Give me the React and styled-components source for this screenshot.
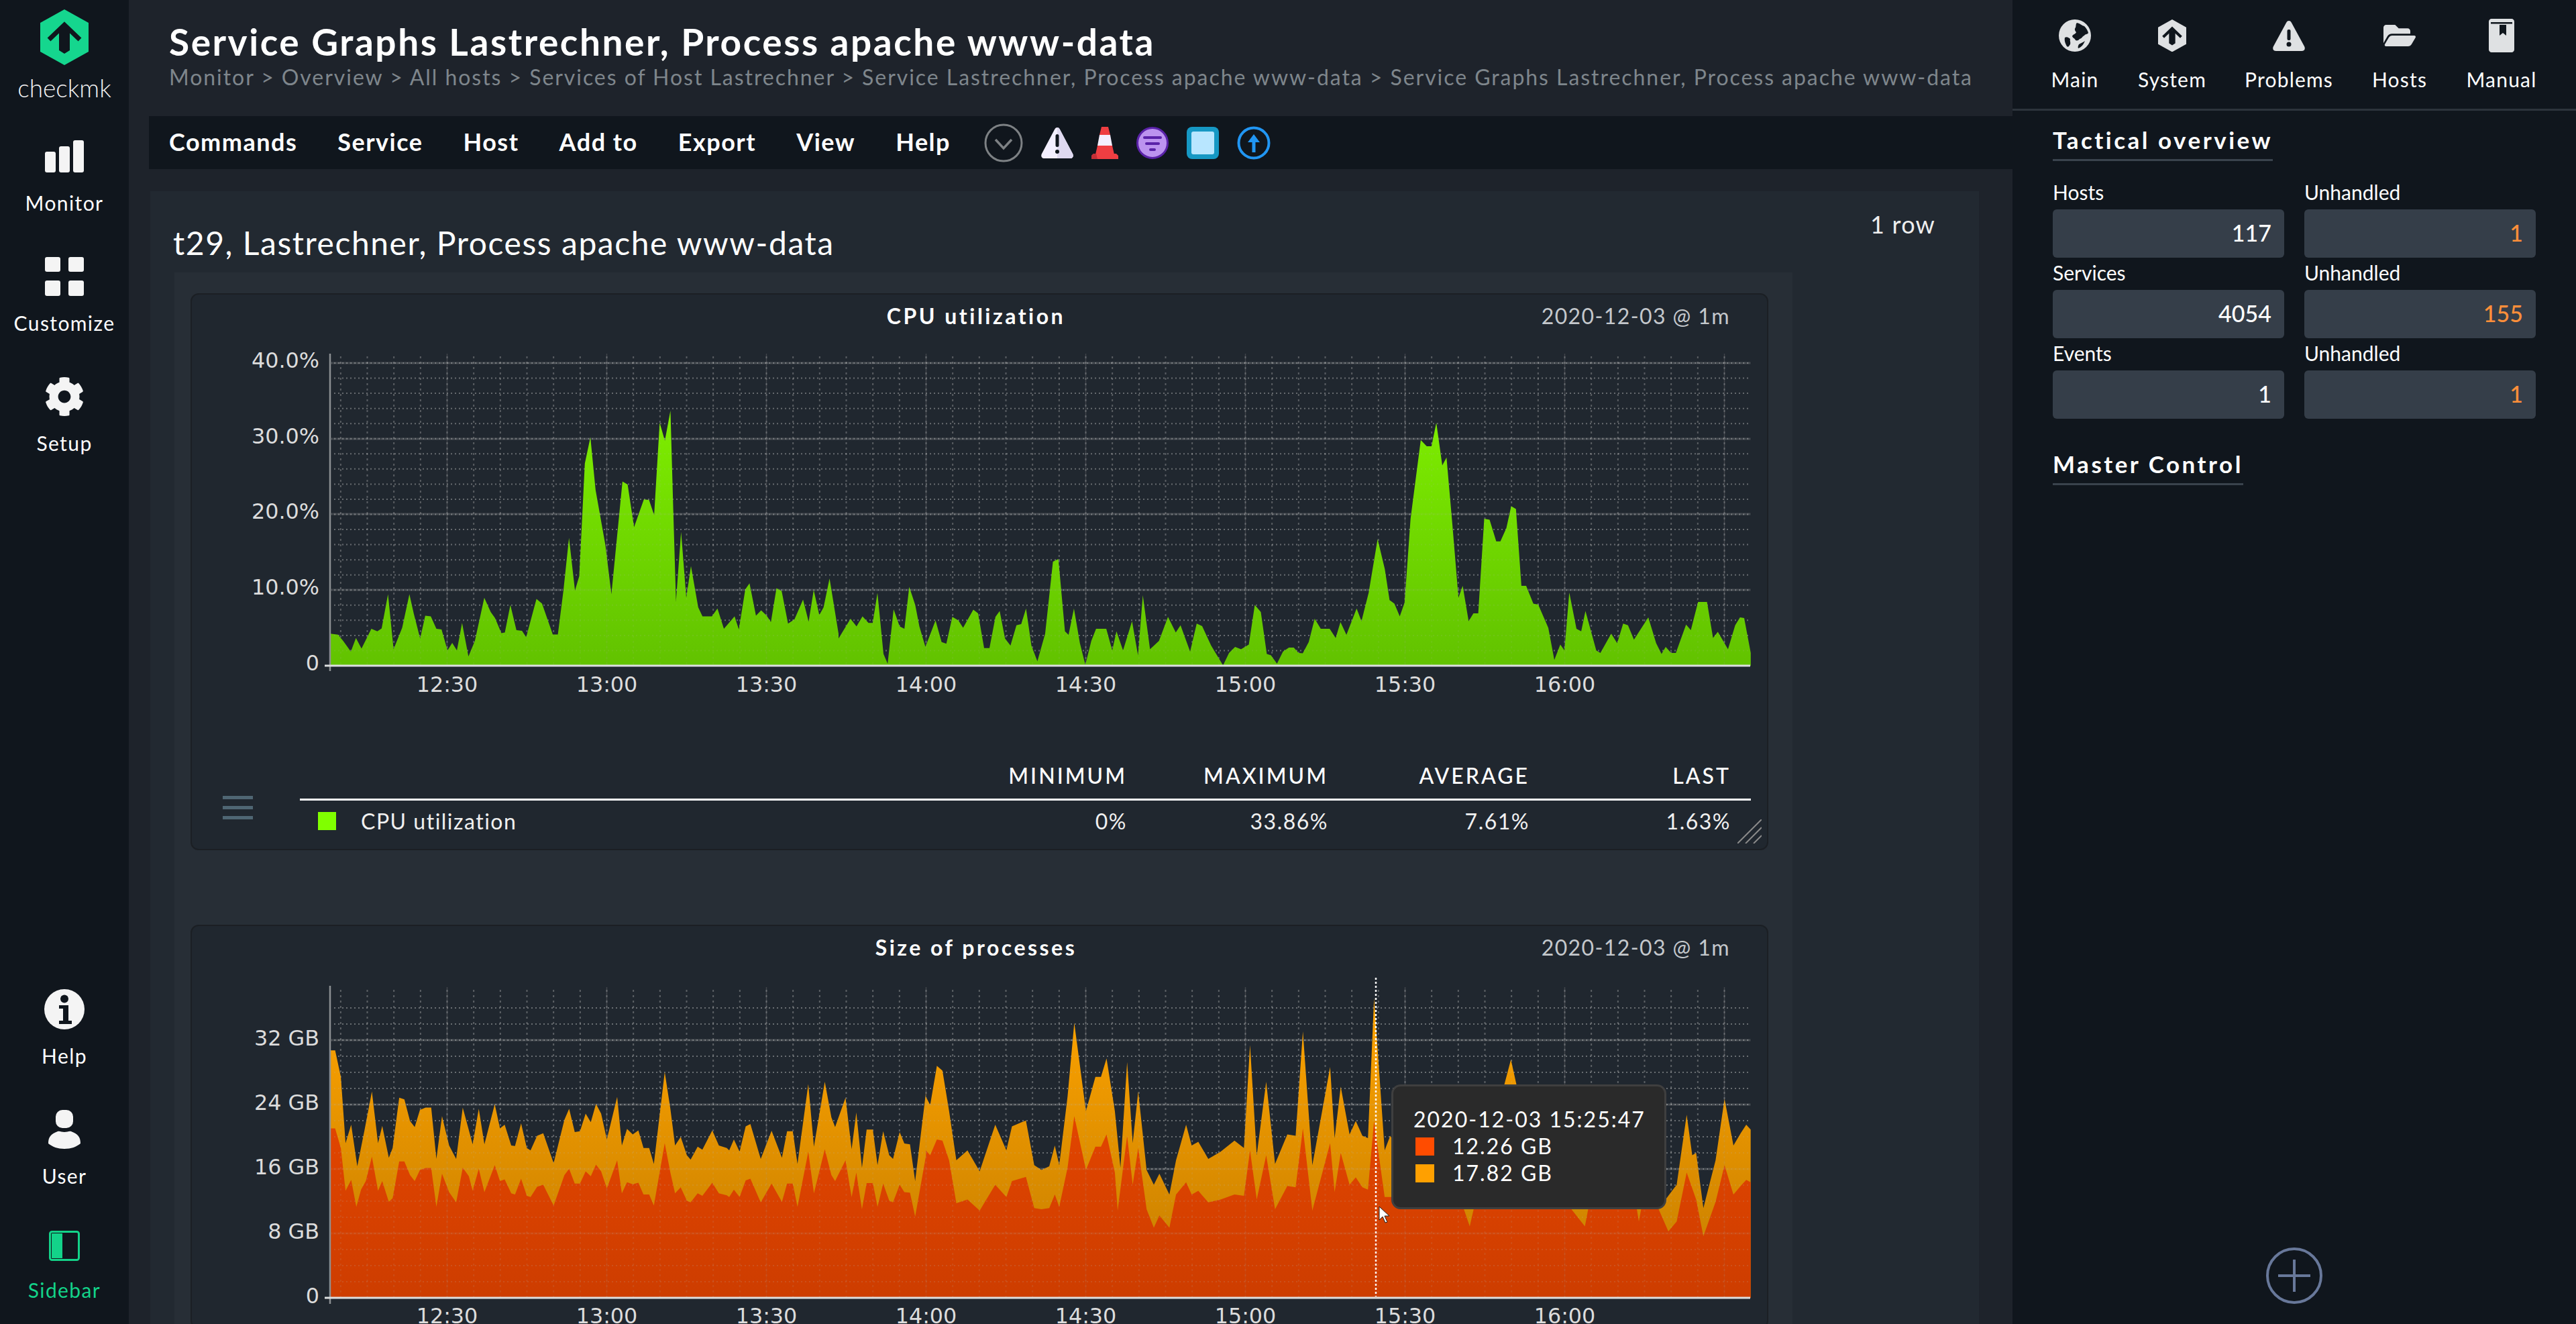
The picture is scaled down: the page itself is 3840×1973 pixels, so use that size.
import React from 'react';
import styled, { createGlobalStyle } from 'styled-components';
import { FaCog, FaFolderOpen } from 'react-icons/fa';

const GlobalStyle = createGlobalStyle`
  html, body { margin: 0; height: 100%; background: #10161d; }
  body { font-family: 'Lato', 'Liberation Sans', sans-serif; color: #fff; overflow: hidden; }
  #root { height: 100%; }
`;

const Page = styled.div`
  display: flex;
  height: 100vh;
  overflow: hidden;
`;

/* left navigation */
const Nav = styled.nav`
  width: 192px;
  flex: none;
  background: #10161d;
  display: flex;
  flex-direction: column;
  justify-content: space-between;
  padding-bottom: 29px;
  box-sizing: border-box;
`;

const Brand = styled.div`
  height: 203px;
  display: flex;
  flex-direction: column;
  align-items: center;
  padding-top: 14px;
  box-sizing: border-box;
`;

const BrandName = styled.div`
  font-size: 37px;
  font-weight: 300;
  line-height: 44px;
  margin-top: 12px;
  color: #f4f4f4;
`;

const NavGroup = styled.div`
  display: flex;
  flex-direction: column;
  gap: 61px;
`;

const NavItem = styled.div`
  height: 118px;
  display: flex;
  flex-direction: column;
  align-items: center;
  color: ${p => (p.$active ? '#13d389' : '#fff')};
  margin-top: ${p => (p.$active ? -6 : 0)}px;
`;

const NavIcon = styled.div`
  height: 60px;
  margin-bottom: ${p => (p.$active ? 18 : 21)}px;
  display: flex;
  align-items: center;
  justify-content: center;
  color: ${p => (p.$active ? '#13d389' : '#f4f4f4')};
`;

const NavLabel = styled.div`
  font-size: 30px;
  line-height: 36px;
  letter-spacing: 1.4px;
`;

/* main column */
const Main = styled.main`
  flex: 1;
  min-width: 0;
  background: #1e232b;
  display: flex;
  flex-direction: column;
`;

const Header = styled.header`
  height: 173px;
  padding: 35px 0 0 60px;
  box-sizing: border-box;
`;

const Title = styled.h1`
  margin: 0;
  font-size: 55px;
  font-weight: 700;
  line-height: 54px;
  letter-spacing: 2.55px;
  color: #fff;
`;

const Breadcrumb = styled.div`
  margin-top: 6px;
  font-size: 32px;
  line-height: 40px;
  letter-spacing: 1.95px;
  color: #7e868c;
  white-space: nowrap;
`;

const Toolbar = styled.div`
  margin-left: 30px;
  height: 79px;
  padding-left: 30px;
  display: flex;
  align-items: center;
  background: #10161d;
`;

const Menu = styled.div`
  display: flex;
  gap: 60px;
`;

const MenuItem = styled.div`
  font-size: 36px;
  font-weight: 700;
  padding-bottom: 3px;
  letter-spacing: 1.5px;
`;

const ToolIcons = styled.div`
  display: flex;
  align-items: center;
  gap: 27px;
  margin-left: 50px;
`;

const ResultPanel = styled.section`
  flex: 1;
  min-height: 0;
  margin: 33px 50px 0 32px;
  background: #222931;
  overflow: hidden;
`;

const PanelHead = styled.div`
  height: 121px;
  display: flex;
  justify-content: space-between;
  padding: 0 65px 0 34px;
`;

const PanelTitle = styled.div`
  margin-top: 52px;
  font-size: 48px;
  line-height: 50px;
  letter-spacing: 1.55px;
`;

const RowCount = styled.div`
  margin-top: 29px;
  font-size: 36px;
  line-height: 40px;
  letter-spacing: 1.2px;
  color: #eee;
`;

const Frame = styled.div`
  margin-left: 36px;
  width: 2412px;
  height: 100%;
  padding: 31px 36px 0 24px;
  box-sizing: border-box;
  background: #272e36;
`;

const GraphBox = styled.div`
  position: relative;
  background: #20272f;
  border: 2px solid #1b1f24;
  border-radius: 12px;
  & + & { margin-top: 111px; }
`;

const GraphHead = styled.div`
  height: 68px;
  display: grid;
  grid-template-columns: 1fr auto 1fr;
  align-items: center;
  padding: 0 55px 5px 45px;
  box-sizing: border-box;
`;

const GraphTitle = styled.div`
  font-size: 32px;
  font-weight: 700;
  letter-spacing: 3.5px;
  grid-column: 2;
`;

const GraphDate = styled.div`
  font-size: 32px;
  letter-spacing: 1.4px;
  color: #c4c8cc;
  justify-self: end;
`;

const Plot = styled.svg`
  display: block;
`;

const AxisText = styled.text`
  font-family: 'DejaVu Sans', sans-serif;
  font-size: 31.8px;
  fill: #dcdcdc;
`;

const Legend = styled.div`
  position: relative;
  margin: 82px 24px 0 161px;
  display: grid;
  grid-template-columns: 1fr repeat(4, 300px);
`;

const LegendHead = styled.div`
  height: 68px;
  line-height: 68px;
  border-bottom: 3px solid #fff;
  padding-right: 30px;
  text-align: right;
  text-transform: uppercase;
  font-size: 32px;
  font-weight: 500;
  letter-spacing: 3px;
`;

const LegendCell = styled.div`
  height: 72px;
  line-height: 62px;
  padding-right: 30px;
  text-align: right;
  font-size: 32px;
  letter-spacing: 1.5px;
  color: #f0f0f0;
`;

const LegendName = styled(LegendCell)`
  display: flex;
  align-items: flex-start;
  gap: 37px;
  padding-left: 27px;
  text-align: left;
`;

const Swatch = styled.span`
  width: ${p => p.$size || 27}px;
  height: 27px;
  margin-top: ${p => p.$top || 0}px;
  background: ${p => p.$color};
  flex: none;
`;

const Grip = styled.div`
  position: absolute;
  left: -115px;
  top: 64px;
  width: 45px;
  display: flex;
  flex-direction: column;
  gap: 10px;
  & > span { height: 5px; background: #4f6673; }
`;

const ResizeHandle = styled.svg`
  position: absolute;
  right: 8px;
  bottom: 8px;
`;

const Tip = styled.div`
  position: absolute;
  left: 1788px;
  top: 236px;
  width: 410px;
  height: 186px;
  box-sizing: border-box;
  padding: 29px 0 0 30px;
  background: #2a2a2a;
  border: 3px solid #3f3f3f;
  border-radius: 14px;
  font-size: 32px;
  letter-spacing: 2px;
`;

const TipRow = styled.div`
  display: flex;
  align-items: center;
  gap: 27px;
  height: 40px;
  line-height: 40px;
  margin-left: ${p => (p.$swatch ? 3 : 0)}px;
`;

/* right sidebar */
const Side = styled.aside`
  width: 840px;
  flex: none;
  background: #10161d;
  display: flex;
  flex-direction: column;
`;

const SideTabs = styled.div`
  height: 165px;
  border-bottom: 3px solid #2d343c;
  box-sizing: border-box;
  display: grid;
  grid-template-columns: 146px 144px 204px 126px 178px;
  padding: 29px 0 0 20px;
`;

const SideTab = styled.div`
  display: flex;
  flex-direction: column;
  align-items: center;
  color: #dfe1e3;
`;

const TabIcon = styled.div`
  height: 48px;
  margin-bottom: 22px;
  display: flex;
  align-items: center;
`;

const TabLabel = styled.div`
  font-size: 30px;
  line-height: 38px;
  letter-spacing: 1.2px;
  color: #fff;
`;

const SideBody = styled.div`
  flex: 1;
  padding: 23px 60px 0;
  position: relative;
`;

const Snapin = styled.h2`
  display: inline-block;
  margin: 0;
  padding-bottom: 9px;
  border-bottom: 3px solid #3a434d;
  font-size: 35px;
  font-weight: 700;
  line-height: 40px;
  letter-spacing: 3.5px;
`;

const Stats = styled.div`
  display: grid;
  grid-template-columns: 345px 345px;
  column-gap: 30px;
  margin: 24px 0 47px;
`;

const Stat = styled.div`
  display: flex;
  flex-direction: column;
  height: 120px;
`;

const StatLabel = styled.div`
  font-size: 30px;
  line-height: 44px;
  padding-bottom: 4px;
`;

const StatValue = styled.div`
  height: 72px;
  border-radius: 6px;
  background: #353e49;
  padding-right: 19px;
  text-align: right;
  font-size: 34px;
  font-weight: 500;
  line-height: 70px;
  color: ${p => (p.$warn ? '#ff8f3a' : '#fff')};
`;

const AddButton = styled.svg`
  position: absolute;
  left: 378px;
  bottom: 30px;
`;

/* drawn icons */
const BarsIcon = () => (
  <svg width="58" height="48" viewBox="0 0 58 48" fill="currentColor">
    <rect x="0" y="17" width="16" height="31" rx="3" />
    <rect x="21" y="9" width="16" height="39" rx="3" />
    <rect x="42" y="0" width="16" height="48" rx="3" />
  </svg>
);

const TilesIcon = () => (
  <svg width="58" height="58" viewBox="0 0 58 58" fill="currentColor">
    <rect x="0" y="0" width="23" height="22" rx="3" />
    <rect x="35" y="0" width="23" height="22" rx="3" />
    <rect x="0" y="35" width="23" height="23" rx="3" />
    <rect x="35" y="35" width="23" height="23" rx="3" />
  </svg>
);

const InfoIcon = () => (
  <svg width="60" height="60" viewBox="0 0 60 60">
    <circle cx="30" cy="30" r="30" fill="#f4f4f4" />
    <circle cx="30" cy="14.5" r="6" fill="#10161d" />
    <path d="M22 24h14v23h5v5H22v-5h6V29h-6z" fill="#10161d" />
  </svg>
);

const UserIcon = () => (
  <svg width="48" height="58" viewBox="0 0 48 58" fill="#f4f4f4">
    <rect x="11" y="0" width="26" height="27" rx="10" />
    <path d="M0 50C0 40 4 36 14 32c3-1 6 1 10 1s7-2 10-1c10 4 14 8 14 18-6 5-14 8-24 8S6 55 0 50z" />
  </svg>
);

const SidebarIcon = () => (
  <svg width="46" height="45" viewBox="0 0 46 45">
    <rect x="1.5" y="1.5" width="43" height="42" rx="3" fill="none" stroke="#13d389" strokeWidth="3" />
    <rect x="4" y="4" width="16" height="37" fill="#13d389" />
  </svg>
);

const LogoMark = ({ size = 72, fill = '#15d68e', ink = '#10161d' }) => (
  <svg width={size} height={(size * 83) / 72} viewBox="0 0 72 83">
    <polygon points="36,0 72,20 72,63 36,83 0,63 0,20" fill={fill} />
    <path d="M13 45 36 23l23 22" fill="none" stroke={ink} strokeWidth="7" />
    <polygon points="28,28 44,28 44,61 36,66 28,61" fill={ink} />
  </svg>
);

const GlobeIcon = () => (
  <svg width="48" height="48" viewBox="0 0 48 48">
    <circle cx="24" cy="24" r="24" fill="#dfe1e3" />
    <path d="M27 5c5 1 7 4 11 5 3 3 5 6 6 10-2 3-4 1-6 4-3 1-4 5-7 5-1 2-4 3-6 2-1-3-4-3-5-6 1-3 5-3 6-6-2-2-3-5-1-7 1-3 0-5 2-7zM9 27c3-2 6 0 8 2-1 3 1 5 0 8-2 3-3 5-5 3-2-4-4-8-3-13zM30 37c3-2 7-3 9-5-2 5-5 9-10 11-1-2 0-4 1-6z" fill="#10161d" />
  </svg>
);

const AlertIcon = () => (
  <svg width="48" height="48" viewBox="0 0 48 48">
    <path d="M24 2c2 0 3 1 4 3l19 35c2 4 0 7-4 7H5c-4 0-6-3-4-7L20 5c1-2 2-3 4-3z" fill="#dfe1e3" />
    <rect x="21.500" y="15" width="5" height="16" rx="2" fill="#10161d" />
    <circle cx="24" cy="37" r="3.500" fill="#10161d" />
  </svg>
);

const BookIcon = () => (
  <svg width="38" height="50" viewBox="0 0 38 50">
    <path d="M4 0h30c2 0 4 2 4 4v42c0 2-2 4-4 4H4c-2 0-4-2-4-4V4c0-2 2-4 4-4z" fill="#dfe1e3" />
    <rect x="3" y="5" width="32" height="2.500" fill="#10161d" />
    <path d="M16 9h10v16l-5-4-5 4z" fill="#10161d" />
  </svg>
);

const ChevronTool = () => (
  <svg width="58" height="58" viewBox="0 0 58 58">
    <circle cx="29" cy="29" r="27" fill="none" stroke="#7d8184" strokeWidth="3" />
    <path d="M17 24l12 13 12-13" fill="none" stroke="#7d8184" strokeWidth="3.500" />
  </svg>
);

const WarnTool = () => (
  <svg width="48" height="46" viewBox="0 0 48 46">
    <path d="M24 0c2 0 3 1 4 3l19 36c2 4 0 7-3 7H4c-3 0-5-3-3-7L20 3c1-2 2-3 4-3z" fill="#f3efff" />
    <path d="M24 0c2 0 3 1 4 3l19 36c2 4 0 7-3 7H24z" fill="#dfd9f0" />
    <rect x="21.500" y="10" width="5" height="19" rx="2.500" fill="#10161d" />
    <circle cx="24" cy="36" r="3" fill="#10161d" />
  </svg>
);

const ConeTool = () => (
  <svg width="40" height="48" viewBox="0 0 40 48">
    <path d="M15 0h10l3 12H12z" fill="#ef3e42" />
    <path d="M12 12h16l3 16H9z" fill="#f4efff" />
    <path d="M9 28h22l3 13H6z" fill="#ef3e42" />
    <path d="M3 40h34l3 3v5H0v-5z" fill="#ef3e42" />
    <path d="M3 40h4l2 8H0v-5z" fill="#c42f36" />
  </svg>
);

const FilterTool = () => (
  <svg width="48" height="48" viewBox="0 0 48 48">
    <circle cx="24" cy="24" r="22.500" fill="#bc93ef" stroke="#5a22a8" strokeWidth="3" />
    <rect x="10" y="14" width="28" height="4" rx="2" fill="#5a22a8" />
    <rect x="13" y="23" width="22" height="4" rx="2" fill="#5a22a8" />
    <rect x="19" y="32" width="10" height="4" rx="2" fill="#5a22a8" />
  </svg>
);

const SquareTool = () => (
  <svg width="48" height="48" viewBox="0 0 48 48">
    <rect width="48" height="48" rx="8" fill="#1698c4" />
    <rect x="7" y="7" width="34" height="34" rx="3" fill="#b8e6ff" />
  </svg>
);

const UploadTool = () => (
  <svg width="50" height="50" viewBox="0 0 50 50">
    <circle cx="25" cy="25" r="22.500" fill="none" stroke="#2196f3" strokeWidth="4" />
    <path d="M25 12l9 12h-6.500v15h-5V24H16z" fill="#2196f3" />
  </svg>
);

/* traced series, [x, y] in page pixels after scaling */
const scale = (pts, x0, sx, y0, sy) => pts.map(([x, y]) => [x0 + x / sx, y0 + y / sy]);

const cpuA = [[380,1300],[398,1304],[410,1330],[428,1375],[440,1318],[453,1362],[476,1280],[490,1290],[500,1278],[515,1135],[528,1365],[548,1275],[565,1135],[575,1215],[590,1320],[602,1225],[615,1228],[628,1280],[640,1282],[654,1370],[665,1338],[676,1370],[688,1255],[703,1395],[718,1330],[740,1150],[755,1210],[765,1235],[780,1298],[788,1295],[801,1180],[815,1285],[828,1288],[838,1315],[862,1155],[875,1175],[900,1303],[912,1303],[925,1120],[938,900],[952,1120],[962,1060],[975,590],[988,480],[1000,700],[1023,930],[1037,1135],[1063,665],[1075,678],[1090,855],[1113,740],[1125,742],[1137,805],[1150,420],[1162,495],[1175,370],[1182,800],[1188,1165],[1200,875],[1212,1150],[1223,1018],[1240,1190],[1250,1228],[1272,1228],[1285,1195],[1300,1280],[1325,1228],[1335,1282],[1350,1115],[1360,1090],[1375,1225],[1387,1203],[1400,1225],[1410,1252],[1423,1110],[1435,1122],[1450,1258],[1465,1240],[1485,1158],[1498,1250],[1510,1118],[1523,1222],[1533,1190],[1547,1070],[1568,1300]];
const cpuB = [[0,1320],[20,1238],[30,1270],[40,1228],[50,1255],[57,1255],[65,1130],[75,1385],[82,1425],[92,1198],[102,1270],[110,1280],[118,1105],[128,1180],[135,1270],[145,1355],[162,1245],[172,1335],[180,1342],[190,1230],[200,1245],[208,1275],[225,1200],[233,1215],[243,1360],[252,1360],[262,1230],[269,1205],[278,1320],[287,1350],[297,1265],[305,1260],[313,1195],[322,1350],[332,1415],[345,1300],[358,1000],[367,988],[378,1290],[384,1305],[393,1195],[403,1340],[412,1430],[422,1330],[430,1280],[447,1280],[457,1370],[464,1290],[475,1370],[490,1248],[500,1390],[508,1140],[520,1365],[535,1330],[550,1230],[563,1295],[571,1265],[587,1375],[598,1258],[607,1268],[622,1350],[642,1432],[652,1380],[662,1355],[672,1365],[685,1345],[695,1180],[705,1210],[715,1385],[722,1390],[732,1425],[742,1375],[752,1358],[760,1358],[768,1380],[775,1382],[785,1335],[795,1238],[805,1280],[820,1280],[830,1318],[838,1252],[848,1305],[865,1195],[873,1248],[885,1130],[900,905],[912,1030],[920,1160],[928,1175],[937,1228],[945,1170],[955,820],[972,492],[982,518],[990,518],[998,420],[1008,598],[1015,565],[1025,850],[1035,1150],[1042,1100],[1052,1248],[1060,1215],[1068,1215],[1078,820],[1087,825],[1098,915],[1105,915],[1115,860],[1123,768],[1131,780],[1140,1100],[1148,1100],[1160,1175],[1168,1178],[1185,1275],[1195,1410],[1205,1345],[1212,1370],[1220,1128],[1232,1280],[1240,1290],[1247,1205],[1265,1370],[1272,1380],[1290,1300],[1300,1340],[1310,1258],[1318,1265],[1328,1325],[1352,1232],[1365,1340],[1374,1385],[1381,1355],[1390,1380],[1398,1380],[1415,1262],[1423,1285],[1435,1168],[1450,1168],[1460,1318],[1468,1292],[1485,1365],[1497,1265],[1505,1232],[1512,1235],[1523,1380]];
const cpuLine = [...scale(cpuA, 250, 1.568, 480, 2.8), ...scale(cpuB, 1250, 1.12, 480, 2.8)];

const sizeTopA = [[302,452],[313,452],[325,560],[335,830],[347,755],[360,925],[375,780],[391,620],[404,830],[413,760],[427,890],[435,850],[449,645],[460,652],[472,740],[482,765],[493,695],[505,685],[517,685],[528,895],[540,720],[555,840],[570,895],[584,685],[605,835],[618,690],[630,835],[652,672],[663,770],[673,755],[687,840],[695,842],[708,750],[720,850],[728,860],[742,800],[755,790],[777,912],[800,735],[810,690],[822,785],[833,782],[845,710],[856,745],[867,670],[878,710],[890,815],[912,642],[922,840],[933,772],[945,795],[957,778],[968,850],[980,850],[990,915],[1013,540],[1025,690],[1035,840],[1047,805],[1060,880],[1068,897],[1083,845],[1093,857],[1114,778],[1128,840],[1145,850],[1150,860],[1160,815],[1172,865],[1185,762],[1195,752],[1217,895],[1240,780],[1262,890],[1273,782],[1285,782],[1295,915],[1318,590],[1330,845],[1353,580],[1367,725],[1375,765],[1397,645],[1410,855],[1420,705],[1432,930],[1442,775],[1455,775],[1465,920],[1477,782],[1490,880],[1498,895],[1512,785],[1522,832],[1534,835],[1545,985],[1568,620]];
const sizeTopB = [[0,640],[8,675],[20,515],[30,535],[42,700],[55,900],[75,860],[97,945],[125,755],[145,860],[155,762],[180,738],[195,920],[208,940],[222,925],[232,840],[240,920],[255,640],[267,340],[288,700],[305,560],[315,560],[325,485],[340,700],[350,930],[362,500],[372,830],[382,620],[397,940],[410,1000],[420,955],[438,1040],[450,900],[468,755],[478,840],[490,825],[508,895],[530,865],[555,820],[572,850],[583,430],[595,880],[612,580],[628,915],[650,795],[665,800],[678,375],[695,920],[727,520],[735,810],[746,600],[762,795],[773,740],[785,800],[795,810],[806,240],[825,860],[835,800],[860,900],[1000,800],[1040,592],[1052,490],[1062,592],[1100,800],[1300,800],[1330,1060],[1350,1000],[1368,715],[1378,880],[1385,870],[1398,1095],[1420,900],[1436,650],[1452,840],[1465,790],[1475,755],[1483,775]];
const sizeLowA = [[302,770],[313,770],[325,850],[335,1025],[347,980],[358,1090],[368,1020],[378,985],[391,885],[404,1025],[413,985],[427,1070],[435,1055],[449,905],[460,905],[472,960],[482,985],[493,940],[505,932],[517,932],[528,1090],[540,955],[555,1030],[570,1072],[584,930],[597,965],[605,1025],[618,935],[630,1030],[652,920],[663,985],[673,978],[687,1035],[695,1040],[708,975],[720,1045],[728,1050],[742,1008],[755,1000],[777,1085],[800,960],[810,935],[822,995],[833,995],[845,945],[856,965],[867,918],[878,945],[890,1015],[912,900],[922,1035],[933,990],[945,998],[957,992],[968,1040],[980,1040],[990,1085],[1013,830],[1025,950],[1035,1035],[1047,1010],[1060,1065],[1068,1072],[1083,1035],[1093,1045],[1114,992],[1128,1035],[1145,1043],[1150,1050],[1160,1020],[1172,1050],[1185,982],[1195,975],[1217,1072],[1240,995],[1262,1070],[1273,995],[1285,995],[1295,1090],[1318,865],[1330,1035],[1353,855],[1367,960],[1375,985],[1397,900],[1410,1050],[1420,950],[1432,1100],[1442,993],[1455,993],[1465,1090],[1477,995],[1490,1065],[1498,1072],[1512,1000],[1522,1030],[1534,1032],[1545,1130],[1568,880]];
const sizeLowB = [[0,860],[8,880],[20,815],[30,820],[42,900],[55,1075],[75,1060],[97,1105],[125,1000],[145,1050],[155,985],[180,968],[195,1095],[208,1100],[222,1095],[232,1040],[240,1090],[255,930],[267,720],[288,940],[305,845],[315,845],[325,795],[340,950],[345,1105],[362,800],[372,1000],[382,850],[397,1100],[410,1175],[420,1125],[438,1175],[450,1040],[468,990],[478,1040],[490,1025],[508,1072],[530,1060],[555,1040],[572,1045],[583,860],[595,1060],[612,880],[628,1100],[650,1005],[665,1010],[678,770],[695,1105],[727,830],[735,1030],[746,870],[762,1000],[773,970],[785,1010],[795,1020],[806,740],[825,1050],[840,1050],[960,1050],[978,1170],[990,1050],[1150,1050],[1160,1098],[1185,1170],[1195,1050],[1275,1050],[1282,1150],[1290,1050],[1310,1060],[1335,1190],[1350,1150],[1368,950],[1385,1060],[1398,1210],[1420,1070],[1436,920],[1452,1040],[1465,1005],[1475,980],[1483,990]];
const sizeTop = [...scale(sizeTopA, 280, 1.425, 1400, 2.736), ...scale(sizeTopB, 1380, 1.206, 1400, 2.736)];
const sizeLow = [...scale(sizeLowA, 280, 1.425, 1400, 2.736), ...scale(sizeLowB, 1380, 1.206, 1400, 2.736)];

const areaPath = (pts, base) =>
  `M${pts[0][0].toFixed(1)} ${base}` + pts.map(([x, y]) => `L${x.toFixed(1)} ${y.toFixed(1)}`).join('') + `L${pts[pts.length - 1][0].toFixed(1)} ${base}Z`;

const PLOT_LEFT = 492;
const PLOT_RIGHT = 2609;
const TIMES = ['12:30', '13:00', '13:30', '14:00', '14:30', '15:00', '15:30', '16:00'];
const FIRST_TICK = 666.5;
const TICK = 238;
const FIVE_MIN = TICK / 6;

function Grid({ top, base, minorStep, majors, opacity = 1 }) {
  const minorY = [];
  for (let y = base - minorStep; y >= top + 8; y -= minorStep) minorY.push(y);
  const minorX = [];
  for (let x = FIRST_TICK - 4 * FIVE_MIN; x < PLOT_RIGHT; x += FIVE_MIN) minorX.push(x);
  const ticks = [];
  for (let i = 0; i < 9; i++) ticks.push(FIRST_TICK + i * TICK);
  return (
    <g fill="none" opacity={opacity}>
      {minorY.map(y => (
        <line key={y} x1={PLOT_LEFT + 6} x2={PLOT_RIGHT} y1={y} y2={y} stroke="rgba(190,190,190,.38)" strokeWidth="2" strokeDasharray="2 4" />
      ))}
      {minorX.map(x => (
        <line key={x} x1={x} x2={x} y1={top + 4} y2={base} stroke="rgba(190,190,190,.3)" strokeWidth="2" strokeDasharray="3 5" />
      ))}
      {ticks.map(x => (
        <line key={x} x1={x} x2={x} y1={top} y2={base} stroke="rgba(150,150,150,.22)" strokeWidth="1.500" />
      ))}
      {majors.map(y => (
        <line key={y} x1={PLOT_LEFT + 2} x2={PLOT_RIGHT} y1={y} y2={y} stroke="rgba(180,180,180,.42)" strokeWidth="3" strokeDasharray="1 1" />
      ))}
    </g>
  );
}

function Axes({ top, base, bottom, labels, labelY, lift }) {
  return (
    <g>
      <line x1={PLOT_LEFT} x2={PLOT_LEFT} y1={top} y2={bottom} stroke="#8b8f92" strokeWidth="2.500" />
      <line x1={PLOT_LEFT - 8} x2={PLOT_RIGHT} y1={base} y2={base} stroke="#dcdfe0" strokeWidth="3" />
      {labels.map(([text, y]) => (
        <AxisText key={text} x="476" y={y + lift} textAnchor="end">{text}</AxisText>
      ))}
      {TIMES.map((text, i) => (
        <AxisText key={text} x={FIRST_TICK + i * TICK} y={labelY} textAnchor="middle">{text}</AxisText>
      ))}
    </g>
  );
}

function CpuChart() {
  const grid = { top: 527, base: 992, minorStep: 22.55, majors: [541, 654, 766, 879] };
  return (
    <Plot width="2348" height="533" viewBox="286 507 2348 533">
      <defs>
        <linearGradient id="cpuFill" x1="0" y1="0" x2="0" y2="1">
          <stop offset="0" stopColor="#7eee00" />
          <stop offset="1" stopColor="#62c200" />
        </linearGradient>
      </defs>
      <Grid {...grid} />
      <path d={areaPath(cpuLine, 992)} fill="url(#cpuFill)" />
      <Grid {...grid} opacity={0.3} />
      <Axes
        top={527}
        base={992}
        bottom={1000}
        labelY={1031}
        lift={7}
        labels={[['40.0%', 541], ['30.0%', 654], ['20.0%', 766], ['10.0%', 879], ['0', 992]]}
      />
    </Plot>
  );
}

function SizeChart() {
  const grid = { top: 1471, base: 1934, minorStep: 24, majors: [1550, 1646, 1742, 1838] };
  return (
    <Plot width="2348" height="530" viewBox="286 1448 2348 530">
      <defs>
        <linearGradient id="sizeTopFill" x1="0" y1="0" x2="0" y2="1">
          <stop offset="0" stopColor="#ffa400" />
          <stop offset="1" stopColor="#c27c00" />
        </linearGradient>
        <linearGradient id="sizeLowFill" x1="0" y1="0" x2="0" y2="1">
          <stop offset="0" stopColor="#e24500" />
          <stop offset="1" stopColor="#cd3d00" />
        </linearGradient>
      </defs>
      <Grid {...grid} />
      <path d={areaPath(sizeTop, 1934)} fill="url(#sizeTopFill)" />
      <path d={areaPath(sizeLow, 1934)} fill="url(#sizeLowFill)" />
      <Grid {...grid} opacity={0.4} />
      <line x1="2051" x2="2051" y1="1457" y2="1932" stroke="#fff" strokeWidth="2.500" strokeDasharray="3 3" />
      <path d="M2056 1798v20l5-5 4 9 3-1-4-9h7z" fill="#fff" stroke="#222" strokeWidth="1" />
      <Axes
        top={1469}
        base={1934}
        bottom={1943}
        labelY={1972}
        lift={8}
        labels={[['32 GB', 1550], ['24 GB', 1646], ['16 GB', 1742], ['8 GB', 1838], ['0', 1934]]}
      />
    </Plot>
  );
}

const MENU = ['Commands', 'Service', 'Host', 'Add to', 'Export', 'View', 'Help'];
const STATS = [
  ['Hosts', '117', 'Unhandled', '1'],
  ['Services', '4054', 'Unhandled', '155'],
  ['Events', '1', 'Unhandled', '1'],
];

export default function App() {
  return (
    <Page>
      <GlobalStyle />
      <Nav>
        <div>
          <Brand>
            <LogoMark />
            <BrandName>checkmk</BrandName>
          </Brand>
          <NavGroup>
            <NavItem>
              <NavIcon><BarsIcon /></NavIcon>
              <NavLabel>Monitor</NavLabel>
            </NavItem>
            <NavItem>
              <NavIcon><TilesIcon /></NavIcon>
              <NavLabel>Customize</NavLabel>
            </NavItem>
            <NavItem>
              <NavIcon><FaCog size={60} /></NavIcon>
              <NavLabel>Setup</NavLabel>
            </NavItem>
          </NavGroup>
        </div>
        <NavGroup>
          <NavItem>
            <NavIcon><InfoIcon /></NavIcon>
            <NavLabel>Help</NavLabel>
          </NavItem>
          <NavItem>
            <NavIcon><UserIcon /></NavIcon>
            <NavLabel>User</NavLabel>
          </NavItem>
          <NavItem $active>
            <NavIcon $active><SidebarIcon /></NavIcon>
            <NavLabel>Sidebar</NavLabel>
          </NavItem>
        </NavGroup>
      </Nav>

      <Main>
        <Header>
          <Title>Service Graphs Lastrechner, Process apache www-data</Title>
          <Breadcrumb>
            Monitor &gt; Overview &gt; All hosts &gt; Services of Host Lastrechner &gt; Service Lastrechner, Process apache www-data &gt; Service Graphs Lastrechner, Process apache www-data
          </Breadcrumb>
        </Header>
        <Toolbar>
          <Menu>
            {MENU.map(m => <MenuItem key={m}>{m}</MenuItem>)}
          </Menu>
          <ToolIcons>
            <ChevronTool />
            <WarnTool />
            <ConeTool />
            <FilterTool />
            <SquareTool />
            <UploadTool />
          </ToolIcons>
        </Toolbar>
        <ResultPanel>
          <PanelHead>
            <PanelTitle>t29, Lastrechner, Process apache www-data</PanelTitle>
            <RowCount>1 row</RowCount>
          </PanelHead>
          <Frame>
            <GraphBox>
              <GraphHead>
                <GraphTitle>CPU utilization</GraphTitle>
                <GraphDate>2020-12-03 @ 1m</GraphDate>
              </GraphHead>
              <CpuChart />
              <Legend>
                <Grip><span /><span /><span /></Grip>
                <LegendHead />
                <LegendHead>Minimum</LegendHead>
                <LegendHead>Maximum</LegendHead>
                <LegendHead>Average</LegendHead>
                <LegendHead>Last</LegendHead>
                <LegendName><Swatch $color="#80ff00" $top={17} />CPU utilization</LegendName>
                <LegendCell>0%</LegendCell>
                <LegendCell>33.86%</LegendCell>
                <LegendCell>7.61%</LegendCell>
                <LegendCell>1.63%</LegendCell>
              </Legend>
              <ResizeHandle width="36" height="36" viewBox="0 0 36 36">
                <path d="M0 36 36 0M12 36 36 12M24 36 36 24" stroke="#8a8a8a" strokeWidth="2" />
              </ResizeHandle>
            </GraphBox>
            <GraphBox>
              <GraphHead>
                <GraphTitle>Size of processes</GraphTitle>
                <GraphDate>2020-12-03 @ 1m</GraphDate>
              </GraphHead>
              <SizeChart />
              <Tip>
                <TipRow>2020-12-03 15:25:47</TipRow>
                <TipRow $swatch><Swatch $color="#ff4c00" $size={28} />12.26 GB</TipRow>
                <TipRow $swatch><Swatch $color="#ffa000" $size={28} />17.82 GB</TipRow>
              </Tip>
            </GraphBox>
          </Frame>
        </ResultPanel>
      </Main>

      <Side>
        <SideTabs>
          <SideTab><TabIcon><GlobeIcon /></TabIcon><TabLabel>Main</TabLabel></SideTab>
          <SideTab><TabIcon><LogoMark size={42} fill="#dfe1e3" /></TabIcon><TabLabel>System</TabLabel></SideTab>
          <SideTab><TabIcon><AlertIcon /></TabIcon><TabLabel>Problems</TabLabel></SideTab>
          <SideTab><TabIcon><FaFolderOpen size={48} /></TabIcon><TabLabel>Hosts</TabLabel></SideTab>
          <SideTab><TabIcon><BookIcon /></TabIcon><TabLabel>Manual</TabLabel></SideTab>
        </SideTabs>
        <SideBody>
          <Snapin>Tactical overview</Snapin>
          <Stats>
            {STATS.map(([a, b, c, d], i) => (
              <React.Fragment key={i}>
                <Stat><StatLabel>{a}</StatLabel><StatValue>{b}</StatValue></Stat>
                <Stat><StatLabel>{c}</StatLabel><StatValue $warn>{d}</StatValue></Stat>
              </React.Fragment>
            ))}
          </Stats>
          <Snapin>Master Control</Snapin>
          <AddButton width="84" height="84" viewBox="0 0 84 84">
            <circle cx="42" cy="42" r="40" fill="none" stroke="#68789a" strokeWidth="4" />
            <path d="M42 18v48M18 42h48" stroke="#68789a" strokeWidth="4" />
          </AddButton>
        </SideBody>
      </Side>
    </Page>
  );
}
